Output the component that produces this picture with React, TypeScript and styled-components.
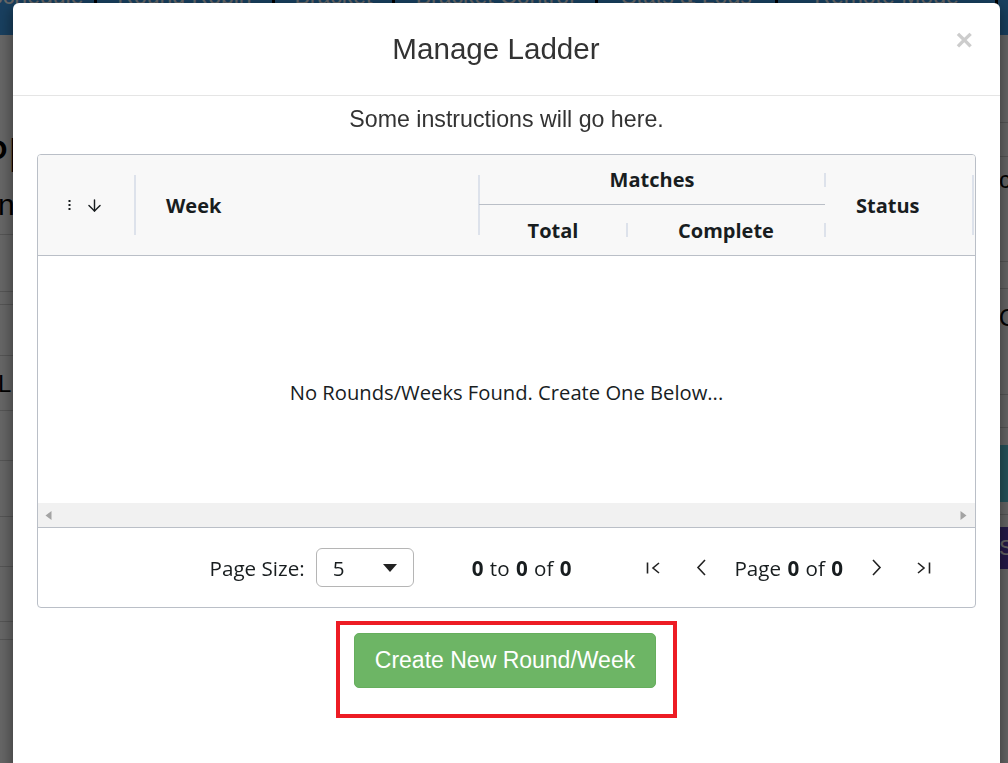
import React from 'react';
import styled, { createGlobalStyle } from 'styled-components';
import { ArrowDown } from 'lucide-react';

const GlobalStyle = createGlobalStyle`
  html, body {
    margin: 0;
    padding: 0;
    height: 100%;
    overflow: hidden;
  }
  body {
    font-family: "Liberation Sans", Arial, sans-serif;
    background: #fff;
  }
`;

/* ---------- page behind the modal ---------- */

const Page = styled.div`
  height: 100vh;
  display: flex;
  flex-direction: column;
  background: #fff;
`;

const NavBar = styled.nav`
  height: 35px;
  flex-shrink: 0;
  display: flex;
  background: #3d9eec;
  overflow: hidden;
`;

const NavItem = styled.div<{ $w: number; $first?: boolean }>`
  width: ${(p) => p.$w}px;
  flex-shrink: 0;
  margin-top: -15px;
  margin-left: ${(p) => (p.$first ? '-23px' : '0')};
  height: 60px;
  box-sizing: border-box;
  border-right: 3px solid #000;
  color: #fff;
  font-size: 23px;
  line-height: 1;
  text-align: center;
  white-space: nowrap;
`;

const PageMain = styled.div`
  flex: 1;
  display: flex;
  justify-content: space-between;
`;

const SideCol = styled.div<{ $w: number; $shift: number }>`
  width: ${(p) => p.$w}px;
  overflow: hidden;
  display: flex;
  flex-direction: column;

  & > div {
    margin-left: ${(p) => p.$shift}px;
    width: 80px;
  }
`;

const StripRow = styled.div<{ $h: number; $line?: boolean; $bg?: string; $size?: number }>`
  height: ${(p) => p.$h}px;
  flex-shrink: 0;
  box-sizing: border-box;
  border-bottom: ${(p) => (p.$line ? '1px solid #d4d4d4' : 'none')};
  background: ${(p) => p.$bg || 'transparent'};
  color: ${(p) => (p.$bg ? '#fff' : '#000')};
  font-size: ${(p) => p.$size || 22}px;
  line-height: ${(p) => p.$h}px;
  white-space: nowrap;
`;

/* ---------- modal ---------- */

const Backdrop = styled.div`
  position: fixed;
  inset: 0;
  background: rgba(0, 0, 0, 0.6);
`;

const Modal = styled.div`
  position: fixed;
  top: 3px;
  left: 13px;
  width: 987px;
  height: 820px;
  background: #fff;
  border-radius: 6px;
  box-shadow: 0 5px 15px rgba(0, 0, 0, 0.5);
  display: flex;
  flex-direction: column;
`;

const ModalHeader = styled.div`
  height: 92px;
  flex-shrink: 0;
  border-bottom: 1px solid #e5e5e5;
  display: grid;
  grid-template-columns: 1fr auto 1fr;
  align-items: center;
  padding: 0 27px 0 24px;
`;

const Title = styled.h4`
  grid-column: 2;
  margin: 0 18px 0 0;
  font-size: 29.6px;
  font-weight: 400;
  color: #333;
`;

const CloseButton = styled.button`
  grid-column: 3;
  justify-self: end;
  align-self: start;
  margin-top: 22px;
  padding: 0;
  border: none;
  background: none;
  font-family: "Liberation Sans", Arial, sans-serif;
  font-size: 30px;
  font-weight: 700;
  line-height: 1;
  color: #ccc;
  cursor: pointer;
`;

const ModalBody = styled.div`
  padding: 0 24px;
  display: flex;
  flex-direction: column;
  align-items: center;
`;

const Instructions = styled.p`
  margin: 10px 0 21px;
  font-size: 23.2px;
  color: #333;
`;

/* ---------- grid ---------- */

const Grid = styled.div`
  align-self: stretch;
  height: 454px;
  box-sizing: border-box;
  border: 1px solid #babfc7;
  border-radius: 4px;
  overflow: hidden;
  display: flex;
  flex-direction: column;
  font-family: "Open Sans", "Noto Sans", sans-serif;
  color: #181d1f;
`;

const GridHeader = styled.div`
  height: 100px;
  flex-shrink: 0;
  background: #f8f8f8;
  border-bottom: 1px solid #babfc7;
  display: grid;
  grid-template-columns: 97px 344px 148px 198px 148px 1fr;
  grid-template-rows: 50px 50px;
`;

const HeadCell = styled.div<{
  $col: string;
  $row: string;
  $sep?: number;
  $align?: 'start' | 'center' | 'end';
  $line?: boolean;
}>`
  grid-column: ${(p) => p.$col};
  grid-row: ${(p) => p.$row};
  position: relative;
  display: flex;
  align-items: center;
  justify-content: ${(p) => (p.$align === 'center' ? 'center' : p.$align === 'end' ? 'flex-end' : 'flex-start')};
  padding: ${(p) => (p.$align === 'end' ? '0 31px 0 0' : p.$align === 'center' ? '0' : '0 0 0 31px')};
  gap: 14px;
  box-sizing: border-box;
  border-bottom: ${(p) => (p.$line ? '1px solid #babfc7' : 'none')};
  font-size: 20px;
  font-weight: 700;

  &::after {
    content: '';
    display: ${(p) => (p.$sep ? 'block' : 'none')};
    position: absolute;
    right: -1px;
    top: 50%;
    width: 2px;
    height: ${(p) => p.$sep || 0}px;
    transform: translateY(-50%);
    background: #dde2eb;
  }
`;

const GridBody = styled.div`
  flex: 1;
  background: #fff;
  display: flex;
  align-items: center;
  justify-content: center;
  padding-top: 24px;
  font-size: 20.2px;
`;

const HScroll = styled.div`
  height: 24px;
  flex-shrink: 0;
  background: #f1f1f1;
  display: flex;
  align-items: center;
  justify-content: space-between;
  padding: 0 8px 0 7px;
`;

const Pagination = styled.div`
  height: 79px;
  flex-shrink: 0;
  border-top: 1px solid #babfc7;
  display: flex;
  align-items: center;
  justify-content: flex-end;
  padding-right: 42px;
  font-size: 20.6px;
`;

const PageSelect = styled.div`
  width: 98px;
  height: 39px;
  box-sizing: border-box;
  margin-left: 11px;
  border: 1px solid #b5b5b5;
  border-radius: 6px;
  display: flex;
  align-items: center;
  justify-content: space-between;
  padding: 0 16px 0 16px;
`;

const Summary = styled.span<{ $gap: number }>`
  margin-left: ${(p) => p.$gap}px;
  white-space: nowrap;
  word-spacing: 1px;
`;

const PageIcon = styled.span<{ $ml: number }>`
  width: 20px;
  height: 20px;
  margin-left: ${(p) => p.$ml}px;
  display: flex;
  align-items: center;
  justify-content: center;
  color: #222;
`;

/* ---------- action ---------- */

const Highlight = styled.div`
  margin-top: 13px;
  border: 4px solid #ed1c24;
  padding: 8px 17px 26px 14px;
`;

const CreateButton = styled.button`
  height: 55px;
  padding: 0 20px;
  border: 1px solid #66ae5d;
  border-radius: 5px;
  background: #6db565;
  color: #fff;
  font-family: "Liberation Sans", Arial, sans-serif;
  font-size: 23px;
  cursor: pointer;
`;

const MenuDots = () => (
  <svg width="3" height="10" viewBox="0 0 3 10">
    <rect x="0.5" y="0" width="2" height="2" fill="#181d1f" />
    <rect x="0.5" y="4" width="2" height="2" fill="#181d1f" />
    <rect x="0.5" y="8" width="2" height="2" fill="#181d1f" />
  </svg>
);

const Tri = ({ dir }: { dir: 'l' | 'r' }) => (
  <svg width="7" height="9" viewBox="0 0 7 9">
    <path d={dir === 'l' ? 'M6.5 0 L0.5 4.5 L6.5 9 Z' : 'M0.5 0 L6.5 4.5 L0.5 9 Z'} fill="#a3a3a3" />
  </svg>
);

const Chevron = ({ dir, bar }: { dir: 'l' | 'r'; bar?: boolean }) => {
  if (bar) {
    return (
      <svg width="16" height="12" viewBox="0 0 16 12" fill="none" stroke="#222" strokeWidth="1.6">
        {dir === 'l' ? (
          <>
            <path d="M1.5 0.5 V11.5" />
            <path d="M13 1 L7 6 L13 11" />
          </>
        ) : (
          <>
            <path d="M3 1 L9 6 L3 11" />
            <path d="M14.5 0.5 V11.5" />
          </>
        )}
      </svg>
    );
  }
  return (
    <svg width="12" height="17" viewBox="0 0 12 17" fill="none" stroke="#222" strokeWidth="1.6">
      <path d={dir === 'l' ? 'M10 1 L3 8.5 L10 16' : 'M2 1 L9 8.5 L2 16'} />
    </svg>
  );
};

const Caret = () => (
  <svg width="14" height="8" viewBox="0 0 14 8">
    <path d="M0 0 H14 L7 8 Z" fill="#222" />
  </svg>
);

export default function App() {
  const navItems = [
    { label: 'Schedule', w: 120 },
    { label: 'Round Robin', w: 178 },
    { label: 'Bracket', w: 120 },
    { label: 'Bracket Control', w: 203 },
    { label: 'Stats & Logs', w: 180 },
    { label: 'Remote Mode', w: 220 },
    { label: 'Settings', w: 140 },
  ];

  return (
    <>
      <GlobalStyle />
      <Page>
        <NavBar>
          {navItems.map((n, i) => (
            <NavItem key={n.label} $w={n.w} $first={i === 0}>
              {n.label}
            </NavItem>
          ))}
        </NavBar>
        <PageMain>
          <SideCol $w={13} $shift={-22}>
            <StripRow $h={92} />
            <StripRow $h={58} $size={46}>Pla</StripRow>
            <StripRow $h={40} $size={30}>Ann</StripRow>
            <StripRow $h={10} $line />
            <StripRow $h={57} $line />
            <StripRow $h={13} $line />
            <StripRow $h={51} $line />
            <StripRow $h={55} $line $size={24}>{'\u00a0\u00a0\u00a0L'}</StripRow>
            <StripRow $h={50} $line />
            <StripRow $h={56} $line />
            <StripRow $h={50} $line />
            <StripRow $h={55} $line />
            <StripRow $h={18} $line />
          </SideCol>
          <SideCol $w={8} $shift={-1}>
            <StripRow $h={88} $line />
            <StripRow $h={34} $line />
            <StripRow $h={46} $size={24}>co</StripRow>
            <StripRow $h={59} $line />
            <StripRow $h={27} $line />
            <StripRow $h={57} $size={24}>Co</StripRow>
            <StripRow $h={49} $line />
            <StripRow $h={33} $line />
            <StripRow $h={17} />
            <StripRow $h={57} $bg="#5ed0e4" />
            <StripRow $h={13} $line />
            <StripRow $h={12} />
            <StripRow $h={42} $bg="#5a3fb5" $size={22}>Se</StripRow>
          </SideCol>
        </PageMain>
      </Page>

      <Backdrop />

      <Modal>
        <ModalHeader>
          <Title>Manage Ladder</Title>
          <CloseButton aria-label="Close">×</CloseButton>
        </ModalHeader>
        <ModalBody>
          <Instructions>Some instructions will go here.</Instructions>

          <Grid>
            <GridHeader>
              <HeadCell $col="1" $row="1 / span 2" $align="end" $sep={60}>
                <MenuDots />
                <ArrowDown size={19} strokeWidth={1.8} color="#181d1f" />
              </HeadCell>
              <HeadCell $col="2" $row="1 / span 2" $sep={60}>
                Week
              </HeadCell>
              <HeadCell $col="3 / span 2" $row="1" $align="center" $sep={14} $line>
                Matches
              </HeadCell>
              <HeadCell $col="3" $row="2" $align="center" $sep={14}>
                Total
              </HeadCell>
              <HeadCell $col="4" $row="2" $align="center" $sep={14}>
                Complete
              </HeadCell>
              <HeadCell $col="5" $row="1 / span 2" $sep={60}>
                Status
              </HeadCell>
            </GridHeader>

            <GridBody>No Rounds/Weeks Found. Create One Below...</GridBody>

            <HScroll>
              <Tri dir="l" />
              <Tri dir="r" />
            </HScroll>

            <Pagination>
              <span>Page Size:</span>
              <PageSelect>
                <span>5</span>
                <Caret />
              </PageSelect>
              <Summary $gap={58}>
                <b>0</b> to <b>0</b> of <b>0</b>
              </Summary>
              <PageIcon $ml={73}>
                <Chevron dir="l" bar />
              </PageIcon>
              <PageIcon $ml={27}>
                <Chevron dir="l" />
              </PageIcon>
              <Summary $gap={23}>
                Page <b>0</b> of <b>0</b>
              </Summary>
              <PageIcon $ml={24}>
                <Chevron dir="r" />
              </PageIcon>
              <PageIcon $ml={26}>
                <Chevron dir="r" bar />
              </PageIcon>
            </Pagination>
          </Grid>

          <Highlight>
            <CreateButton>Create New Round/Week</CreateButton>
          </Highlight>
        </ModalBody>
      </Modal>
    </>
  );
}
